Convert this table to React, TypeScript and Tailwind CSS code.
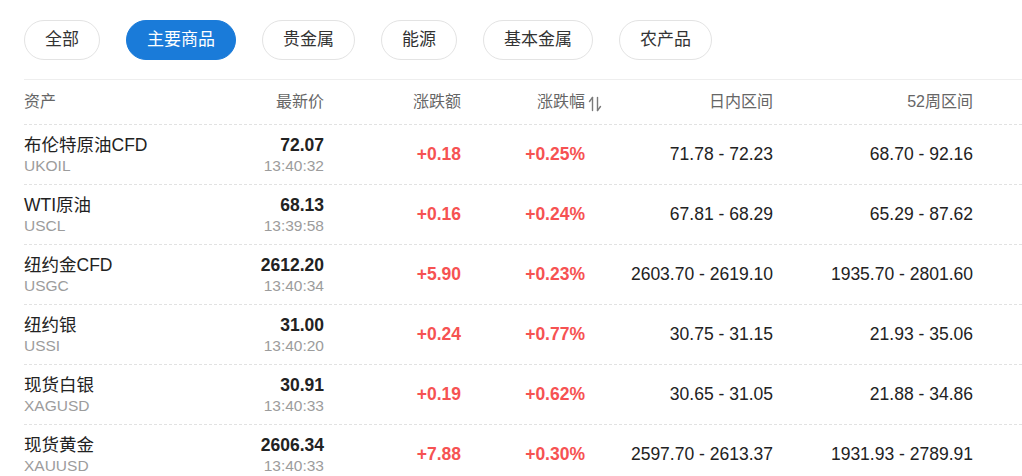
import React from "react";

const tabs = ["全部", "主要商品", "贵金属", "能源", "基本金属", "农产品"];

const rows = [
  { name: "布伦特原油CFD", sym: "UKOIL", price: "72.07", time: "13:40:32", chg: "+0.18", pct: "+0.25%", day: "71.78 - 72.23", wk: "68.70 - 92.16" },
  { name: "WTI原油", sym: "USCL", price: "68.13", time: "13:39:58", chg: "+0.16", pct: "+0.24%", day: "67.81 - 68.29", wk: "65.29 - 87.62" },
  { name: "纽约金CFD", sym: "USGC", price: "2612.20", time: "13:40:34", chg: "+5.90", pct: "+0.23%", day: "2603.70 - 2619.10", wk: "1935.70 - 2801.60" },
  { name: "纽约银", sym: "USSI", price: "31.00", time: "13:40:20", chg: "+0.24", pct: "+0.77%", day: "30.75 - 31.15", wk: "21.93 - 35.06" },
  { name: "现货白银", sym: "XAGUSD", price: "30.91", time: "13:40:33", chg: "+0.19", pct: "+0.62%", day: "30.65 - 31.05", wk: "21.88 - 34.86" },
  { name: "现货黄金", sym: "XAUUSD", price: "2606.34", time: "13:40:33", chg: "+7.88", pct: "+0.30%", day: "2597.70 - 2613.37", wk: "1931.93 - 2789.91" },
];

function SortIcon() {
  return (
    <svg width="14" height="16" viewBox="0 0 14 16" fill="none" stroke="#7a7a7a" strokeWidth="1.4" strokeLinecap="round" strokeLinejoin="round">
      <path d="M4.5 1.5V14.5" />
      <path d="M4.5 1.5L1.5 5.5" />
      <path d="M9.5 1.5V14.5" />
      <path d="M9.5 14.5L12.5 10.5" />
    </svg>
  );
}

const grid = "grid grid-cols-[200px_100px_137px_124px_188px_200px_1fr]";

export default function App() {
  return (
    <div className="w-[1022px] h-[476px] overflow-hidden bg-white pl-6 pt-5 font-['Liberation_Sans','Noto_Sans_CJK_SC',sans-serif] text-[#222]">
      <div className="flex gap-[26px]">
        {tabs.map((t, i) => (
          <div
            key={t}
            className={
              i === 1
                ? "h-10 px-5 rounded-full border border-[#1a7bd9] bg-[#1a7bd9] text-white text-[17px] leading-[38px]"
                : "h-10 px-5 rounded-full border border-[#e3e3e3] bg-white text-[#333] text-[17px] leading-[38px]"
            }
          >
            {t}
          </div>
        ))}
      </div>

      <div className="mt-[19px] border-t border-[#eeeeee]">
        <div className={`${grid} h-[45px] items-center border-b border-dashed border-[#e2e2e2] text-[16px] text-[#666]`}>
          <div>资产</div>
          <div className="text-right">最新价</div>
          <div className="text-right">涨跌额</div>
          <div className="text-right">
            <span className="relative">
              涨跌幅
              <span className="absolute left-full top-[3px] ml-[3px]">
                <SortIcon />
              </span>
            </span>
          </div>
          <div className="text-right">日内区间</div>
          <div className="text-right">52周区间</div>
          <div />
        </div>

        {rows.map((r) => (
          <div key={r.sym} className={`${grid} h-[60px] border-b border-dashed border-[#e2e2e2]`}>
            <div className="pt-[9px]">
              <div className="text-[17.5px] leading-[22px] text-[#222]">{r.name}</div>
              <div className="text-[15.5px] leading-[20px] text-[#9c9c9c]">{r.sym}</div>
            </div>
            <div className="pt-[9px] text-right">
              <div className="text-[17.5px] leading-[22px] font-bold text-[#222]">{r.price}</div>
              <div className="text-[15.5px] leading-[20px] text-[#9c9c9c]">{r.time}</div>
            </div>
            <div className="flex items-center justify-end text-[17.5px] font-bold text-[#f65252]">{r.chg}</div>
            <div className="flex items-center justify-end text-[17.5px] font-bold text-[#f65252]">{r.pct}</div>
            <div className="flex items-center justify-end text-[17.5px] text-[#222]">{r.day}</div>
            <div className="flex items-center justify-end text-[17.5px] text-[#222]">{r.wk}</div>
            <div />
          </div>
        ))}
      </div>
    </div>
  );
}
